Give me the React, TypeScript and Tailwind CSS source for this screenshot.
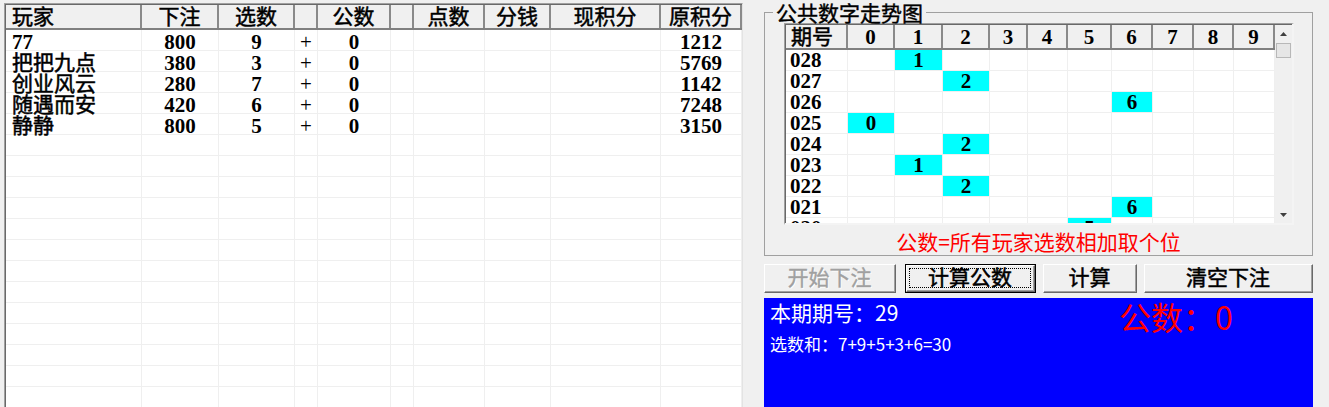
import React from "react";

const leftCols = "grid grid-cols-[136px_77px_76px_23px_73px_23px_71px_66px_110px_81px]";
const chartCols = "grid grid-cols-[62px_47px_48px_47px_38px_40px_44px_41px_41px_40px_41px]";

const leftHeads = ["玩家", "下注", "选数", "", "公数", "", "点数", "分钱", "现积分", "原积分"];

const players: string[][] = [
  ["77", "800", "9", "+", "0", "", "", "", "", "1212"],
  ["把把九点", "380", "3", "+", "0", "", "", "", "", "5769"],
  ["创业风云", "280", "7", "+", "0", "", "", "", "", "1142"],
  ["随遇而安", "420", "6", "+", "0", "", "", "", "", "7248"],
  ["静静", "800", "5", "+", "0", "", "", "", "", "3150"],
];

const emptyRow = ["", "", "", "", "", "", "", "", "", ""];
const leftRows = [...players, ...Array.from({ length: 13 }, () => emptyRow)];

// 期号 + 公数 hit
const trend: [string, number][] = [
  ["028", 1],
  ["027", 2],
  ["026", 6],
  ["025", 0],
  ["024", 2],
  ["023", 1],
  ["022", 2],
  ["021", 6],
  ["020", 5],
];

const digits = [0, 1, 2, 3, 4, 5, 6, 7, 8, 9];

const hasCjk = (s: string) => /[\u4e00-\u9fff]/.test(s);

function PlayerTable() {
  return (
    <div className="ml-[4px] mt-[3px] h-[404px] w-[739px] border-l border-t border-r border-[#a0a0a0] border-r-[#e3e3e3] bg-white">
      <div className="h-full overflow-hidden border-l border-t border-[#696969]">
        {/* header */}
        <div className={`${leftCols} h-[25px] border-b-2 border-[#808080] bg-[#f0f0f0]`}>
          {leftHeads.map((h, i) => (
            <div
              key={i}
              className={`flex items-center border-r-2 border-[#8a8a8a] text-[21px] leading-[22px] [-webkit-text-stroke:0.5px_#000] ${
                i === 0 ? "justify-start pl-[6px]" : "justify-center"
              }`}
            >
              {h}
            </div>
          ))}
        </div>
        {/* rows */}
        {leftRows.map((row, r) => (
          <div key={r} className={`${leftCols} h-[21px] border-b border-[#efefef]`}>
            {row.map((c, i) => (
              <div
                key={i}
                className={`flex items-center border-r border-[#efefef] pt-[2px] text-[21px] leading-[20px] ${
                  i === 0 ? "justify-start pl-[6px]" : "justify-center"
                } ${
                  i === 3
                    ? "font-normal text-[18px]"
                    : hasCjk(c)
                      ? "[-webkit-text-stroke:0.5px_#000]"
                      : "font-bold"
                }`}
              >
                {c}
              </div>
            ))}
          </div>
        ))}
      </div>
    </div>
  );
}

function ScrollBar() {
  return (
    <div className="flex w-[17px] flex-col bg-[#f0f0f0]">
      <div className="flex h-[17px] items-center justify-center">
        <svg width="7" height="4" viewBox="0 0 7 4">
          <path d="M3.5 0 L7 4 L0 4 Z" fill="#404040" />
        </svg>
      </div>
      <div className="mx-[1px] mt-[1px] h-[15px] border border-[#b8b8b8] bg-[#e6e6e6]" />
      <div className="flex-1" />
      <div className="flex h-[17px] items-center justify-center">
        <svg width="7" height="4" viewBox="0 0 7 4">
          <path d="M0 0 L7 0 L3.5 4 Z" fill="#404040" />
        </svg>
      </div>
    </div>
  );
}

function TrendChart() {
  return (
    <div className="ml-[19px] h-[202px] w-[510px] border-l border-t border-r-2 border-b-2 border-[#a0a0a0] border-r-[#f4f4f4] border-b-[#f4f4f4] bg-white">
      <div className="flex h-full border-l border-t border-[#696969]">
        <div className="w-[489px] overflow-hidden">
          <div className={`${chartCols} h-[25px] border-b-2 border-[#808080] bg-[#f0f0f0]`}>
            <div className="flex items-center border-r-2 border-[#8a8a8a] pl-[5px] text-[21px] leading-[22px] [-webkit-text-stroke:0.5px_#000]">
              期号
            </div>
            {digits.map((d) => (
              <div
                key={d}
                className="flex items-center justify-center border-r-2 border-[#8a8a8a] text-[21px] leading-[22px] font-bold"
              >
                {d}
              </div>
            ))}
          </div>
          {trend.map(([no, hit]) => (
            <div key={no} className={`${chartCols} h-[21px]`}>
              <div className="flex items-center border-r border-b border-[#efefef] pl-[4px] text-[21px] leading-[20px] font-bold">
                {no}
              </div>
              {digits.map((d) => (
                <div
                  key={d}
                  className={`flex items-center justify-center border-r border-b border-[#efefef] text-[21px] leading-[20px] font-bold ${
                    d === hit ? "bg-[#00ffff]" : ""
                  }`}
                >
                  {d === hit ? d : ""}
                </div>
              ))}
            </div>
          ))}
        </div>
        <ScrollBar />
      </div>
    </div>
  );
}

function Btn({
  children,
  className,
  disabled,
  isDefault,
}: {
  children: React.ReactNode;
  className: string;
  disabled?: boolean;
  isDefault?: boolean;
}) {
  const face = (
    <div className="flex h-full w-full border-t border-l border-r border-b border-white border-r-[#696969] border-b-[#696969]">
      <div className="flex h-full w-full border-r border-b border-[#a0a0a0] p-[2px]">
        <div
          className={`flex h-full w-full items-center justify-center text-[21px] leading-[22px] ${
            isDefault ? "border border-dotted border-black" : "border border-transparent"
          } ${
            disabled
              ? "text-[#a0a0a0] [text-shadow:1px_1px_0_#ffffff] [-webkit-text-stroke:0.4px_#a0a0a0]"
              : "text-black [-webkit-text-stroke:0.5px_#000]"
          }`}
        >
          {children}
        </div>
      </div>
    </div>
  );
  return (
    <button
      disabled={disabled}
      className={`h-[29px] bg-[#f0f0f0] p-0 ${isDefault ? "border border-black" : ""} ${className}`}
    >
      {face}
    </button>
  );
}

export default function App() {
  return (
    <div className="flex h-[407px] w-[1329px] overflow-hidden bg-[#f0f0f0] text-black [font-family:'Liberation_Serif','Noto_Sans_CJK_SC',serif]">
      <PlayerTable />

      <div className="ml-[21px] flex w-[549px] flex-col">
        <fieldset className="mt-[2px] h-[254px] border border-[#a0a0a0] p-0">
          <legend className="ml-[8px] px-[3px] text-[21px] leading-[21px] [-webkit-text-stroke:0.4px_#000] [font-family:'Noto_Sans_CJK_SC',sans-serif]">
            公共数字走势图
          </legend>
          <TrendChart />
          <div className="mt-[4px] text-center text-[21px] leading-[24px] text-[#ff0000] [font-family:'Noto_Sans_CJK_SC',sans-serif]">
            公数=所有玩家选数相加取个位
          </div>
        </fieldset>

        <div className="mt-[8px] flex gap-[7px]">
          <Btn className="w-[132px]" disabled>
            开始下注
          </Btn>
          <Btn className="ml-[2px] w-[131px]" isDefault>
            计算公数
          </Btn>
          <Btn className="w-[94px]">计算</Btn>
          <Btn className="w-[169px]">清空下注</Btn>
        </div>

        <div className="mt-[5px] flex flex-1 bg-[#0000ff] [font-family:'Noto_Sans_CJK_SC',sans-serif]">
          <div className="w-[355px] pl-[6px] pt-[4px]">
            <div className="text-[21px] leading-[21px] text-white">本期期号：29</div>
            <div className="mt-[12px] text-[17px] leading-[17px] text-white">选数和：7+9+5+3+6=30</div>
          </div>
          <div className="pt-[2px] text-[32px] leading-[32px] text-[#ff0000]">公数：0</div>
        </div>
      </div>
    </div>
  );
}
